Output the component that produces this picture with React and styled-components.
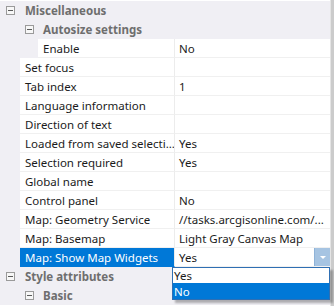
import React from "react";
import styled, { createGlobalStyle } from "styled-components";

const Global = createGlobalStyle`
  html, body { margin: 0; padding: 0; background: #ffffff; }
  body { font-family: "Noto Sans", "Open Sans", sans-serif; font-size: 11.5px; color: #1b1b1b; }
`;

const Frame = styled.div`
  width: 334px;
  height: 306px;
  display: flex;
  overflow: hidden;
  position: relative;
`;

const Grid = styled.div`
  width: 330px;
  padding-top: 1px;
  display: flex;
  flex-direction: column;
  background: #ffffff;
`;

const ScrollEdge = styled.div`
  width: 4px;
  background: #cbcbcb;
  border-left: 1px solid #e4e4e4;
  box-sizing: border-box;
`;

const CatRow = styled.div`
  height: 19px;
  flex: none;
  display: flex;
  align-items: center;
  background: #f0eff4;
  padding-left: ${(p) => p.$iconX}px;
  box-sizing: border-box;
`;

const Toggle = styled.span`
  width: 9px;
  height: 9px;
  box-sizing: border-box;
  border: 1px solid #9a9a9a;
  background: #f7f7f7;
  position: relative;
  flex: none;
  &::after {
    content: "";
    position: absolute;
    left: 1px;
    right: 1px;
    top: 3px;
    height: 1px;
    background: #5a5a5a;
  }
`;

const CatLabel = styled.span`
  margin-left: ${(p) => p.$gap}px;
  font-weight: 700;
  color: #6e6e6e;
  white-space: nowrap;
`;

const PropRow = styled.div`
  height: 19px;
  flex: none;
  display: flex;
  background: #f0eff4;
`;

const NameCell = styled.div`
  margin-left: ${(p) => p.$indent}px;
  width: ${(p) => 175 - p.$indent}px;
  box-sizing: border-box;
  padding-left: 5px;
  display: flex;
  align-items: center;
  white-space: nowrap;
  overflow: hidden;
  background: ${(p) => (p.$selected ? "#0078d7" : "#ffffff")};
  color: ${(p) => (p.$selected ? "#ffffff" : "#1b1b1b")};
  border-bottom: 1px solid ${(p) => (p.$selected ? "#0078d7" : "#f0f0f0")};
  border-right: 1px solid #ececec;
`;

const ValueCell = styled.div`
  flex: 1;
  box-sizing: border-box;
  padding-left: 4px;
  display: flex;
  align-items: center;
  white-space: nowrap;
  overflow: hidden;
  background: #ffffff;
  border-bottom: 1px solid #f0f0f0;
  position: relative;
`;

const ValueText = styled.span`
  flex: 1;
`;

const DropButton = styled.div`
  width: 16px;
  align-self: stretch;
  background: #a6c4e2;
  border-left: 1px solid #8fb3d8;
  box-sizing: border-box;
  display: flex;
  align-items: center;
  justify-content: center;
`;

const Arrow = styled.span`
  width: 0;
  height: 0;
  border-left: 3px solid transparent;
  border-right: 3px solid transparent;
  border-top: 3px solid #ffffff;
`;

const DropList = styled.div`
  position: absolute;
  left: 172px;
  top: 267px;
  width: 158px;
  box-sizing: border-box;
  border: 1px solid #2f6fb3;
  background: #ffffff;
  box-shadow: 3px 3px 2px rgba(0, 0, 0, 0.28);
  display: flex;
  flex-direction: column;
`;

const DropItem = styled.div`
  height: ${(p) => p.$h}px;
  display: flex;
  align-items: center;
  padding-left: 1px;
  background: ${(p) => (p.$active ? "#0078d7" : "#ffffff")};
  color: ${(p) => (p.$active ? "#ffffff" : "#1b1b1b")};
`;

const props = [
  { name: "Set focus", value: "" },
  { name: "Tab index", value: "1" },
  { name: "Language information", value: "" },
  { name: "Direction of text", value: "" },
  { name: "Loaded from saved selecti...", value: "Yes" },
  { name: "Selection required", value: "Yes" },
  { name: "Global name", value: "" },
  { name: "Control panel", value: "No" },
  { name: "Map: Geometry Service", value: "//tasks.arcgisonline.com/..." },
  { name: "Map: Basemap", value: "Light Gray Canvas Map" },
];

function Category({ level, label }) {
  return (
    <CatRow $iconX={level === 0 ? 6 : 25}>
      <Toggle />
      <CatLabel $gap={level === 0 ? 10 : 9}>{label}</CatLabel>
    </CatRow>
  );
}

export default function App() {
  return (
    <>
      <Global />
      <Frame>
        <Grid>
          <Category level={0} label="Miscellaneous" />
          <Category level={1} label="Autosize settings" />
          <PropRow>
            <NameCell $indent={38}>Enable</NameCell>
            <ValueCell>No</ValueCell>
          </PropRow>
          {props.map((p) => (
            <PropRow key={p.name}>
              <NameCell $indent={20}>{p.name}</NameCell>
              <ValueCell>{p.value}</ValueCell>
            </PropRow>
          ))}
          <PropRow>
            <NameCell $indent={20} $selected>
              Map: Show Map Widgets
            </NameCell>
            <ValueCell>
              <ValueText>Yes</ValueText>
              <DropButton>
                <Arrow />
              </DropButton>
            </ValueCell>
          </PropRow>
          <Category level={0} label="Style attributes" />
          <Category level={1} label="Basic" />
        </Grid>
        <ScrollEdge />
        <DropList>
          <DropItem $h={15}>Yes</DropItem>
          <DropItem $h={16} $active>
            No
          </DropItem>
        </DropList>
      </Frame>
    </>
  );
}
